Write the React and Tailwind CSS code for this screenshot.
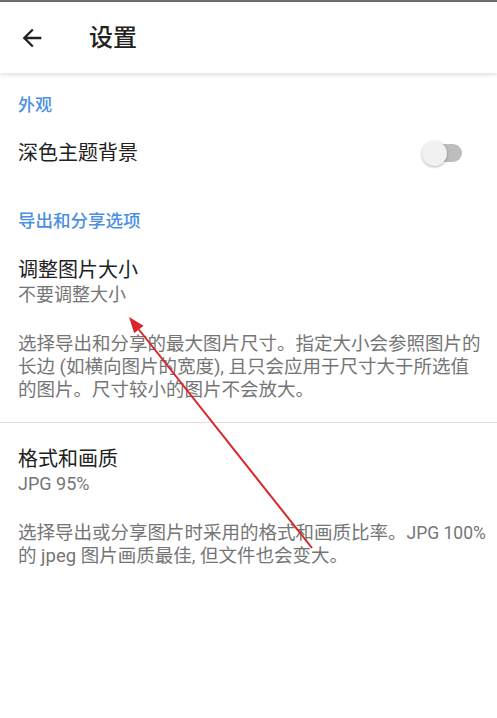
import React from "react";

const font = { fontFamily: 'Roboto, "Noto Sans CJK SC", "Noto Sans", sans-serif' };

function Toggle() {
  return (
    <div className="relative w-[40px] h-[28px] flex items-center">
      <div className="absolute left-[8px] w-[32px] h-[18px] rounded-full bg-[#bdbdbd]" />
      <div className="absolute left-0 w-[25px] h-[25px] rounded-full bg-[#f1f1f1] shadow-[0_1px_3px_rgba(0,0,0,0.3)]" />
    </div>
  );
}

export default function App() {
  return (
    <div className="relative w-full min-h-[718px] bg-white overflow-hidden" style={font}>
      <div className="h-[2px] bg-[#6e6e6e]" />
      <header className="relative z-10 h-[71px] flex items-center bg-white shadow-[0_2px_4px_rgba(0,0,0,0.12)]">
        <div className="w-[89px] pl-[18px] flex items-center">
          <svg width="28" height="28" viewBox="0 0 24 24" className="text-[#212121]">
            <path fill="currentColor" d="M20 11H7.83l5.59-5.59L12 4l-8 8 8 8 1.41-1.41L7.83 13H20v-2z" />
          </svg>
        </div>
        <span className="text-[24px] leading-[30px] font-medium text-[#212121]">设置</span>
      </header>

      <div className="px-[18px]">
        <div className="pt-[20px] h-[44px] text-[17px] leading-[24px] font-medium text-[#4b8fe2]">外观</div>
        <div className="h-[72px] flex items-center justify-between pr-[17px]">
          <span className="text-[20px] leading-[28px] text-[#212121]">深色主题背景</span>
          <Toggle />
        </div>
        <div className="pt-[20px] h-[44px] text-[17.5px] leading-[24px] font-medium text-[#4b8fe2]">导出和分享选项</div>
        <div className="pt-[24px]">
          <div className="text-[20px] leading-[26px] text-[#212121]">调整图片大小</div>
          <div className="text-[18px] leading-[24px] text-[#757575]">不要调整大小</div>
        </div>
        <div className="pt-[26px] pb-[20px] text-[18.5px] leading-[23px] text-[#757575] whitespace-nowrap">
          <div>选择导出和分享的最大图片尺寸。指定大小会参照图片的</div>
          <div>长边 (如横向图片的宽度), 且只会应用于尺寸大于所选值</div>
          <div>的图片。尺寸较小的图片不会放大。</div>
        </div>
      </div>
      <div className="h-px bg-[#e0e0e0]" />
      <div className="px-[18px]">
        <div className="pt-[23px]">
          <div className="text-[20px] leading-[26px] text-[#212121]">格式和画质</div>
          <div className="text-[18px] leading-[24px] text-[#757575]">JPG 95%</div>
        </div>
        <div className="pt-[26px] text-[18.5px] leading-[23px] text-[#757575] whitespace-nowrap">
          <div>选择导出或分享图片时采用的格式和画质比率。<span className="text-[17.5px]">JPG 100%</span></div>
          <div>的 jpeg 图片画质最佳, 但文件也会变大。</div>
        </div>
      </div>

      <svg className="absolute left-0 top-0 pointer-events-none z-20" width="497" height="718" viewBox="0 0 497 718">
        <line x1="138.9" y1="329.5" x2="312" y2="548" stroke="#d9262a" strokeWidth="2" />
        <polygon points="129,317 134.2,333.2 143.6,325.8" fill="#d9262a" />
      </svg>
    </div>
  );
}
